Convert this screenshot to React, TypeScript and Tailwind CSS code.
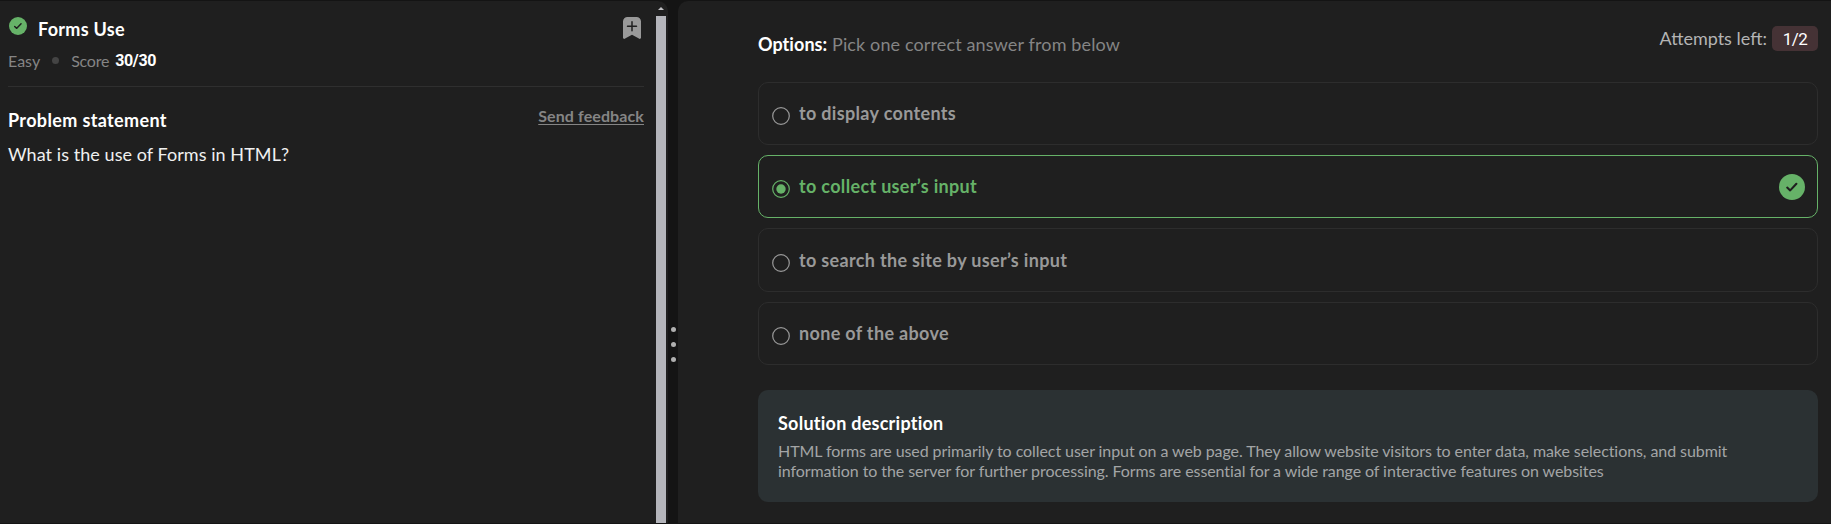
import React from 'react';

const options = [
  { text: 'to display contents', correct: false },
  { text: 'to collect user’s input', correct: true },
  { text: 'to search the site by user’s input', correct: false },
  { text: 'none of the above', correct: false },
];

function CheckCircle({ className }: { className: string }) {
  return (
    <svg viewBox="0 0 26 26" className={className} aria-hidden="true">
      <circle cx="13" cy="13" r="13" fill="#66b268" />
      <path d="M8.200 13.600l3 2.800 6.200-6.600" fill="none" stroke="#1f1f1f" strokeWidth="2.100" strokeLinecap="round" strokeLinejoin="round" />
    </svg>
  );
}

function Bookmark() {
  return (
    <svg viewBox="0 0 18 22" className="mt-[16px] mr-[3.500px] h-[22px] w-[18px]" aria-hidden="true">
      <path d="M4.500 0h9A4.500 4.500 0 0 1 18 4.500V20.600c0 1.100-1.200 1.700-2.100 1L9 17.800l-6.900 3.800c-.9.700-2.100.1-2.100-1V4.500A4.500 4.500 0 0 1 4.500 0z" fill="#999" />
      <path d="M9 4.800v9M4.500 9.300h9" stroke="#1f1f1f" strokeWidth="1.500" strokeLinecap="round" />
    </svg>
  );
}

function Radio({ checked }: { checked: boolean }) {
  return (
    <svg viewBox="0 0 18 18" className="mt-[24.300px] ml-[13px] size-[18px] shrink-0" aria-hidden="true">
      <circle cx="9" cy="9" r="8.300" fill="none" stroke={checked ? '#66b268' : '#999'} strokeWidth="1.200" />
      {checked && <circle cx="9" cy="9" r="4.700" fill="#66b268" />}
    </svg>
  );
}

function ProblemPanel() {
  return (
    <section className="flex w-[668px] shrink-0 overflow-hidden rounded-tr-[10px] bg-[#1f1f1f] pr-[2px]">
      <div className="flex w-[656px] flex-col pr-3 pl-2">
        <header className="flex h-[86px] justify-between border-b border-[#2f2f2f]">
          <div>
            <div className="flex">
              <CheckCircle className="mt-[16px] ml-px size-[18px]" />
              <h1 className="mt-[16px] ml-[11px] text-[18px] leading-6 font-bold tracking-[0.3px] text-white">Forms Use</h1>
            </div>
            <div className="mt-[7px] flex items-center text-[16px] leading-6 text-[#858585]">
              <span>Easy</span>
              <span className="ml-[12px] size-[7px] rounded-full bg-[#444]" />
              <span className="ml-[12px] tracking-[-0.2px]">Score</span>
              <span className="mt-px ml-[6px] font-[Roboto] font-bold tracking-[-0.4px] text-white">30/30</span>
            </div>
          </div>
          <Bookmark />
        </header>
        <div className="flex items-start justify-between">
          <h2 className="mt-[21px] text-[18px] leading-6 font-bold tracking-[0.360px] text-white">Problem statement</h2>
          <a className="mt-[17px] text-[16px] leading-6 font-bold tracking-[0.1px] text-[#858585] underline underline-offset-2">Send feedback</a>
        </div>
        <p className="mt-[10px] text-[18px] leading-6 tracking-[0.06px] text-[#f0f0f0]">What is the use of Forms in HTML?</p>
      </div>
      <div className="flex w-[10px] shrink-0 flex-col items-center">
        <svg viewBox="0 0 6 3" className="mt-[6px] h-[3px] w-[6px]" aria-hidden="true">
          <path d="M0 3L3 0l3 3z" fill="#c0c0c4" />
        </svg>
        <div className="mt-[6px] w-full flex-1 bg-[#b4b5bb]" />
      </div>
    </section>
  );
}

function Divider() {
  return (
    <div className="flex w-[10px] shrink-0 flex-col items-center gap-[10px] pt-[326px]">
      <span className="size-[5px] rounded-full bg-[#b0b0b0]" />
      <span className="size-[5px] rounded-full bg-[#b0b0b0]" />
      <span className="size-[5px] rounded-full bg-[#b0b0b0]" />
    </div>
  );
}

function AnswerPanel() {
  return (
    <section className="flex-1 rounded-tl-[10px] bg-[#1f1f1f] pr-[13px] pl-20">
      <header className="flex h-[80.700px] items-start justify-between text-[18px] leading-6">
        <p className="mt-[31px] tracking-[0.130px] text-[#858585]">
          <b className="font-bold tracking-[0.060px] text-white">Options:</b> Pick one correct answer from below
        </p>
        <div className="mt-[25px] flex items-center">
          <span className="-mt-[2px] text-[#b4b4b4]">Attempts left:</span>
          <span className="ml-[5px] flex h-[25px] w-[46px] items-center justify-center rounded-[5px] bg-[#453235] font-[Roboto] text-[17px] tracking-[-0.500px] text-white">1/2</span>
        </div>
      </header>
      <div className="flex flex-col gap-[10px]">
        {options.map((option) => (
          <label
            key={option.text}
            className={
              option.correct
                ? 'flex h-[63.330px] items-start rounded-[10px] border border-[#66b268] text-[#66b268]'
                : 'flex h-[63.330px] items-start rounded-[10px] border border-[#2d2d2d] text-[#999]'
            }
          >
            <Radio checked={option.correct} />
            <span className="mt-[18.300px] ml-[9px] text-[18px] leading-6 font-bold tracking-[0.330px]">{option.text}</span>
            {option.correct && <CheckCircle className="mt-[18px] mr-[12px] ml-auto size-[26px]" />}
          </label>
        ))}
      </div>
      <div className="mt-[25px] h-[112px] rounded-[10px] bg-[#2b3133] px-5 pt-[21px]">
        <h2 className="text-[18px] leading-6 font-bold tracking-[0.250px] text-white">Solution description</h2>
        <p className="mt-[6px] text-[16px] leading-5 tracking-[-0.075px] whitespace-nowrap text-[#a3a5a6]">
          HTML forms are used primarily to collect user input on a web page. They allow website visitors to enter data, make selections, and submit
          <br />
          information to the server for further processing. Forms are essential for a wide range of interactive features on websites
        </p>
      </div>
    </section>
  );
}

export default function App() {
  return (
    <main className="flex h-[524px] w-[1831px] overflow-hidden border-y border-[#141414] bg-[#141414] font-[Lato,sans-serif]">
      <ProblemPanel />
      <Divider />
      <AnswerPanel />
    </main>
  );
}
